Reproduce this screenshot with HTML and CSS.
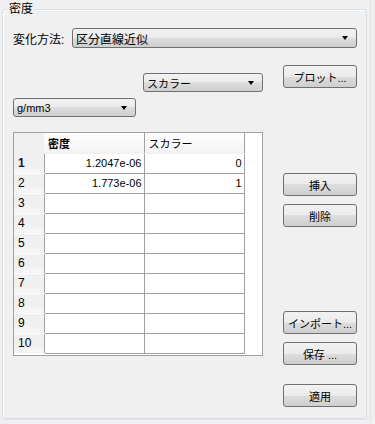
FILE: index.html
```html
<!DOCTYPE html>
<html lang="ja">
<head>
  <meta charset="UTF-8">
  <title>密度</title>
  <link rel="stylesheet" href="styles.css">
</head>
<body>

  <div class="window">
    <div class="group">
      <span class="group-title">密度</span>

      <!-- method row -->
      <div class="method-row">
        <span class="method-label">変化方法:</span>
        <div class="combo combo-method">区分直線近似</div>
      </div>

      <div class="group-body">
        <div class="left-col">
          <div class="combo combo-scalar">スカラー</div>
          <div class="combo combo-unit">g/mm3</div>

          <div class="table-frame">
            <table class="grid">
              <thead>
                <tr>
                  <th class="corner"></th>
                  <th class="col-head bold">密度</th>
                  <th class="col-head">スカラー</th>
                </tr>
              </thead>
              <tbody id="grid-body"></tbody>
            </table>
          </div>
        </div>

        <div class="right-col">
          <button class="btn btn-plot">プロット...</button>
          <button class="btn btn-insert">挿入</button>
          <button class="btn btn-delete">削除</button>
          <button class="btn btn-import">インポート...</button>
          <button class="btn btn-save">保存 ...</button>
          <button class="btn btn-apply">適用</button>
        </div>
      </div>
    </div>
  </div>

  <script>
    // Table rows
    const rows = [
      ["1.2047e-06", "0"],
      ["1.773e-06", "1"]
    ];

    const body = document.getElementById("grid-body");
    for (let i = 0; i < 10; i++) {
      const tr = document.createElement("tr");
      const head = document.createElement("td");
      head.className = "row-head" + (i === 0 ? " current" : "");
      head.textContent = i + 1;
      tr.appendChild(head);

      const data = rows[i] || ["", ""];
      data.forEach(value => {
        const td = document.createElement("td");
        td.className = "cell";
        td.textContent = value;
        tr.appendChild(td);
      });
      body.appendChild(tr);
    }
  </script>

</body>
</html>
```

FILE: styles.css
```css
body {
  margin: 0;
  background: #f0f0f0;
  font-family: "Liberation Sans", "Noto Sans CJK JP", sans-serif;
  font-size: 11px;
  color: #000;
}

.window {
  width: 371px;
  height: 420px;
  padding-top: 9px;
  box-sizing: border-box;
  border-right: 1px solid #dde4ea;
  border-bottom: 1px solid #e4e8ec;
}

.group {
  position: relative;
  margin-left: 2px;
  width: 365px;
  height: 410px;
  box-sizing: border-box;
  border: 1px solid #d5dfe5;
  border-radius: 3px;
  box-shadow: inset 1px 1px 0 #fff;
  padding: 18px 9px 0 10px;
}
.group-title {
  position: absolute;
  top: -8px;
  left: 4px;
  padding: 0 2px;
  background: #f0f0f0;
  font-size: 12px;
  line-height: 15px;
}

.method-row {
  display: flex;
  align-items: center;
  height: 20px;
}
.method-label {
  width: 59px;
  font-size: 12px;
}

/* combo boxes */
.combo {
  display: flex;
  align-items: center;
  justify-content: space-between;
  box-sizing: border-box;
  height: 19px;
  padding: 0 8px 0 3px;
  border: 1px solid #707070;
  border-radius: 3px;
  background: linear-gradient(#f2f2f2, #ebebeb 50%, #dddddd 50%, #cfcfcf);
  white-space: nowrap;
}
.combo::after {
  content: "";
  width: 0;
  height: 0;
  border-left: 3.5px solid transparent;
  border-right: 3.5px solid transparent;
  border-top: 4px solid #000;
}
.combo-method {
  flex: 1;
  height: 20px;
  font-size: 12px;
}
.combo-scalar {
  width: 120px;
  margin: 25px 0 0 130px;
}
.combo-unit {
  width: 123px;
  margin-top: 6px;
}

.group-body {
  display: flex;
  gap: 20px;
}
.left-col {
  width: 250px;
}
.right-col {
  display: flex;
  flex-direction: column;
  width: 74px;
}

/* table */
.table-frame {
  margin-top: 15px;
  height: 224px;
  box-sizing: border-box;
  border: 1px solid #a0a0a0;
  background: #fff;
}
.grid {
  border-collapse: collapse;
  table-layout: fixed;
  width: 230px;
}
.grid th,
.grid td {
  height: 20px;
  padding: 0 2px 0 4px;
  box-sizing: border-box;
  overflow: hidden;
  white-space: nowrap;
}
.corner {
  width: 30px;
  background: #f0f0f0;
}
.col-head {
  width: 100px;
  text-align: left;
  font-weight: normal;
  background: linear-gradient(#ffffff, #f3f3f3);
  border-right: 1px solid #a0a0a0;
  border-bottom: 1px solid #f0f0f0;
}
.col-head.bold {
  font-weight: bold;
}
.row-head {
  background: linear-gradient(#f0f0f0, #f0f0f0 65%, #f7f7f7);
  border-bottom: 1px solid #ffffff;
  border-right: 1px solid #a0a0a0;
  font-size: 12px;
}
.row-head.current {
  font-weight: bold;
  color: #10104a;
}
.cell {
  text-align: right;
  border-right: 1px solid #a0a0a0;
  border-bottom: 1px solid #a0a0a0;
}

/* buttons */
.btn {
  height: 23px;
  width: 74px;
  padding: 0;
  border: 1px solid #707070;
  border-radius: 3px;
  background: linear-gradient(#f2f2f2, #ebebeb 50%, #dddddd 50%, #cfcfcf);
  font-family: inherit;
  font-size: 11px;
  color: #000;
}
.btn-plot {
  margin-top: 17px;
}
.btn-insert {
  margin-top: 85px;
}
.btn-delete {
  margin-top: 8px;
}
.btn-import {
  margin-top: 84px;
}
.btn-save {
  margin-top: 8px;
}
.btn-apply {
  margin-top: 19px;
}
```
